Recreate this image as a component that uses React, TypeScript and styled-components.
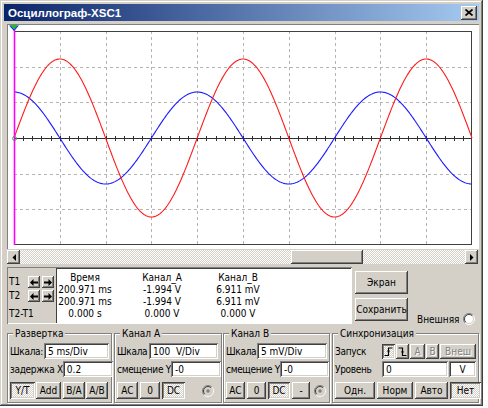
import React from "react";
import styled, { createGlobalStyle, css } from "styled-components";

const GlobalStyle = createGlobalStyle`
  html, body { margin: 0; padding: 0; background: #ffffff; }
  body {
    font-family: "DejaVu Sans Condensed", "DejaVu Sans", "Liberation Sans", Arial, sans-serif;
    font-stretch: condensed;
    font-size: 10px;
    color: #000;
  }
  * { box-sizing: border-box; }
`;

const raised = css`
  background: #d4d0c8;
  box-shadow: inset -1px -1px #404040, inset 1px 1px #ffffff, inset -2px -2px #808080, inset 2px 2px #d4d0c8;
`;
const pressed = css`
  background-color: #ffffff;
  background-image: repeating-conic-gradient(#d4d0c8 0 25%, #ffffff 0 50%);
  background-size: 2px 2px;
  box-shadow: inset 1px 1px #404040, inset -1px -1px #ffffff, inset 2px 2px #808080, inset -2px -2px #d4d0c8;
`;

const Window = styled.div`
  width: 483px;
  height: 406px;
  background: #d4d0c8;
  box-shadow: inset -1px -1px #404040, inset 1px 1px #d4d0c8, inset -2px -2px #808080, inset 2px 2px #ffffff;
  padding: 4px 4px 3px 4px;
  display: flex;
  flex-direction: column;
`;

const TitleBar = styled.div`
  height: 17px;
  display: flex;
  align-items: center;
  justify-content: space-between;
  background: linear-gradient(to right, #0a246a, #a6caf0);
  padding: 0 2px 0 4px;
`;

const TitleText = styled.span`
  font-family: "Liberation Sans", Arial, sans-serif;
  font-stretch: normal;
  font-weight: bold;
  font-size: 11.5px;
  color: #ffffff;
`;

const CloseButton = styled.div`
  ${raised};
  width: 16px;
  height: 14px;
  display: flex;
  align-items: center;
  justify-content: center;
  svg { display: block; }
`;

const Screen = styled.div`
  margin: 3px 0 0 3px;
  width: 472px;
  height: 225px;
  flex: none;
  background: #ffffff;
  box-shadow: inset 1px 1px #808080, inset -1px -1px #ffffff;
  padding: 1px 6px 0 6px;
  svg { display: block; overflow: visible; }
`;

const ScrollBar = styled.div`
  margin: 1px 1px 0 3px;
  height: 14px;
  flex: none;
  display: flex;
`;

const ScrollBtn = styled.div`
  ${raised};
  width: 13px;
  height: 14px;
  display: flex;
  align-items: center;
  justify-content: center;
  svg { display: block; }
`;

const ScrollTrack = styled.div`
  flex: 1;
  display: flex;
  background-color: #ffffff;
  background-image: repeating-conic-gradient(#d4d0c8 0 25%, #ffffff 0 50%);
  background-size: 2px 2px;
`;

const ScrollThumb = styled.div<{ $offset: number; $w: number }>`
  ${raised};
  margin-left: ${(p) => p.$offset}px;
  width: ${(p) => p.$w}px;
  height: 14px;
`;

const MeasureRow = styled.div`
  margin: 3px 0 0 3px;
  height: 57px;
  flex: none;
  display: flex;
`;

const MeasureFrame = styled.div`
  width: 345px;
  height: 57px;
  display: flex;
  padding: 1px;
  box-shadow: inset 1px 1px #808080, inset -1px -1px #ffffff;
`;

const CursorPanel = styled.div`
  width: 48px;
  display: grid;
  grid-template-columns: 17px 12px 12px;
  grid-template-rows: 12px 12px 1fr;
  column-gap: 2px;
  row-gap: 2px;
  padding: 8px 0 0 1px;
  align-items: center;
`;

const CursorLabel = styled.span<{ $span?: boolean }>`
  grid-column: ${(p) => (p.$span ? "1 / 4" : "auto")};
  line-height: 12px;
`;

const ArrowBtn = styled.div`
  ${raised};
  width: 12px;
  height: 12px;
  display: flex;
  align-items: center;
  justify-content: center;
  svg { display: block; }
`;

const Readout = styled.div`
  flex: 1;
  background: #ffffff;
  box-shadow: inset 1px 1px #404040;
  display: grid;
  grid-template-columns: 58px 96px 56px;
  grid-auto-rows: 12px;
  padding-top: 4px;
`;

const Cell = styled.span`
  text-align: center;
  line-height: 12px;
  white-space: nowrap;
`;

const SideButtons = styled.div`
  margin-left: 3px;
  width: 53px;
  display: flex;
  flex-direction: column;
  gap: 4px;
  padding-top: 4px;
`;

const Button = styled.div<{ $w?: number; $h?: number; $on?: boolean; $off?: boolean }>`
  ${(p) => (p.$on ? pressed : raised)};
  width: ${(p) => (p.$w ? `${p.$w}px` : "100%")};
  height: ${(p) => p.$h ?? 17}px;
  flex: none;
  display: flex;
  align-items: center;
  justify-content: center;
  white-space: nowrap;
  color: ${(p) => (p.$off ? "#808080" : "#000000")};
  text-shadow: ${(p) => (p.$off ? "1px 1px #ffffff" : "none")};
  svg { display: block; }
`;

const External = styled.div`
  align-self: flex-end;
  margin: 0 0 -1px 9px;
  display: flex;
  align-items: center;
  gap: 3px;
  svg { display: block; }
`;

const Groups = styled.div`
  margin: 3px 0 0 3px;
  display: flex;
`;

const Group = styled.fieldset<{ $w: number; $ml?: number; $pr?: number }>`
  margin: 0 0 0 ${(p) => p.$ml ?? 0}px;
  width: ${(p) => p.$w}px;
  min-width: 0;
  flex: none;
  border: 1px solid #808080;
  box-shadow: inset 1px 1px #ffffff, 1px 1px #ffffff;
  padding: 3px ${(p) => p.$pr ?? 2}px 3px 1px;
  display: flex;
  flex-direction: column;
`;

const Legend = styled.legend`
  margin-left: 4px;
  padding: 0 2px;
  line-height: 13px;
  background: #d4d0c8;
`;

const Row = styled.div<{ $mt?: number }>`
  display: flex;
  align-items: center;
  justify-content: space-between;
  height: 16px;
  margin-top: ${(p) => p.$mt ?? 0}px;
  padding-left: 1px;
`;

const BtnRow = styled.div<{ $mt?: number }>`
  display: flex;
  align-items: center;
  gap: 2px;
  height: 17px;
  margin-top: ${(p) => p.$mt ?? 0}px;
  padding-left: 1px;
`;

const Label = styled.span`
  white-space: nowrap;
  letter-spacing: -0.3px;
`;

const Field = styled.input<{ $w: number; $center?: boolean }>`
  width: ${(p) => p.$w}px;
  height: 16px;
  flex: none;
  border: none;
  outline: none;
  margin: 0;
  padding: 0 0 0 ${(p) => (p.$center ? 0 : 4)}px;
  text-align: ${(p) => (p.$center ? "center" : "left")};
  font: inherit;
  color: #000;
  background: #ffffff;
  box-shadow: inset 1px 1px #808080, inset -1px -1px #ffffff, inset 2px 2px #404040, inset -2px -2px #d4d0c8;
`;

const Group2 = styled.div`
  display: flex;
  gap: 1px;
`;

const Spacer = styled.div`
  flex: 1;
`;

const RadioWrap = styled.div<{ $mr: number }>`
  margin-right: ${(p) => p.$mr}px;
  svg { display: block; }
`;

/* ---------- drawings ---------- */

const Radio: React.FC<{ fill: string; dot?: boolean }> = ({ fill, dot }) => (
  <svg width="12" height="12" viewBox="0 0 12 12">
    <circle cx="6" cy="6" r="4.5" fill={fill} />
    <path d="M9.9 2.1 A5.5 5.5 0 0 0 2.1 9.9" fill="none" stroke="#808080" strokeWidth="1" />
    <path d="M2.1 9.9 A5.5 5.5 0 0 0 9.9 2.1" fill="none" stroke="#ffffff" strokeWidth="1" />
    <path d="M9.2 2.8 A4.5 4.5 0 0 0 2.8 9.2" fill="none" stroke="#404040" strokeWidth="1" />
    <path d="M2.8 9.2 A4.5 4.5 0 0 0 9.2 2.8" fill="none" stroke="#d4d0c8" strokeWidth="1" />
    {dot && <circle cx="6" cy="6" r="1.7" fill="#808080" />}
  </svg>
);

const LeftArrow = () => (
  <svg width="8" height="7" viewBox="0 0 8 7">
    <path d="M0 3.5 L3.5 0 L3.5 2.5 L8 2.5 L8 4.5 L3.5 4.5 L3.5 7 Z" fill="#000" />
  </svg>
);
const RightArrow = () => (
  <svg width="8" height="7" viewBox="0 0 8 7">
    <path d="M8 3.5 L4.5 0 L4.5 2.5 L0 2.5 L0 4.5 L4.5 4.5 L4.5 7 Z" fill="#000" />
  </svg>
);

const TriLeft = () => (
  <svg width="4" height="7" viewBox="0 0 4 7">
    <path d="M4 0 L0.5 3.5 L4 7 Z" fill="#000" />
  </svg>
);
const TriRight = () => (
  <svg width="4" height="7" viewBox="0 0 4 7">
    <path d="M0 0 L3.5 3.5 L0 7 Z" fill="#000" />
  </svg>
);

const RiseEdge = () => (
  <svg width="9" height="9" viewBox="0 0 9 9">
    <path d="M0.5 8.5 H4.5 V1 H8.5" fill="none" stroke="#000" strokeWidth="1.2" />
    <path d="M2.8 4.5 L4.5 2.4 L6.2 4.5 Z" fill="#000" />
  </svg>
);
const FallEdge = () => (
  <svg width="9" height="9" viewBox="0 0 9 9">
    <path d="M0.5 1 H4.5 V8.5 H8.5" fill="none" stroke="#000" strokeWidth="1.2" />
    <path d="M2.8 4.5 L4.5 6.6 L6.2 4.5 Z" fill="#000" />
  </svg>
);

const PW = 458;
const PH = 214;
const PX0 = 1;
const PY0 = 6;
const CY = PY0 + PH / 2;
const DIVX = PW / 10;
const DIVY = PH / 6;
const PERIOD = DIVX * 4;

function wave(amp: number, phase: number): string {
  let d = "";
  for (let x = 0; x <= PW; x += 1) {
    const y = CY - amp * Math.sin((2 * Math.PI * x) / PERIOD + phase);
    d += `${x === 0 ? "M" : "L"}${(PX0 + x).toFixed(1)} ${y.toFixed(2)} `;
  }
  return d;
}

const Plot = () => {
  const vlines = Array.from({ length: 9 }, (_, i) => PX0 + (i + 1) * DIVX);
  const hlines = [1, 2, 4, 5].map((j) => PY0 + j * DIVY);
  const ticks = Array.from({ length: 49 }, (_, k) => PX0 + (k + 1) * (DIVX / 5));
  return (
    <svg width="460" height="221" viewBox="0 0 460 221">
      {vlines.map((x, i) => (
        <line key={`v${i}`} x1={Math.round(x) + 0.5} y1={PY0} x2={Math.round(x) + 0.5} y2={PY0 + PH}
          stroke="#b4b4b4" strokeDasharray="3 3" shapeRendering="crispEdges" />
      ))}
      {hlines.map((y, i) => (
        <line key={`h${i}`} x1={PX0} y1={Math.round(y) + 0.5} x2={PX0 + PW} y2={Math.round(y) + 0.5}
          stroke="#b4b4b4" strokeDasharray="3 3" shapeRendering="crispEdges" />
      ))}
      <line x1={PX0} y1={CY + 0.5} x2={PX0 + PW} y2={CY + 0.5} stroke="#303030" shapeRendering="crispEdges" />
      {ticks.map((x, i) => (
        <line key={`t${i}`} x1={Math.round(x) + 0.5} y1={CY - 2} x2={Math.round(x) + 0.5} y2={CY + 3}
          stroke="#303030" shapeRendering="crispEdges" />
      ))}
      <rect x={PX0 + 0.5} y={PY0 + 0.5} width={PW - 1} height={PH - 1} fill="none" stroke="#404040" shapeRendering="crispEdges" />
      <path d={wave(46, Math.PI / 2)} fill="none" stroke="#1a1aff" strokeWidth="1.1" />
      <path d={wave(79, 0)} fill="none" stroke="#ff1a1a" strokeWidth="1.1" />
      <circle cx={PX0 + 0.5} cy={CY + 0.5} r="2" fill="none" stroke="#30c030" strokeWidth="1" />
      <line x1={PX0 + 0.5} y1={2} x2={PX0 + 0.5} y2={PY0 + PH} stroke="#ff00ff" strokeWidth="1.6" />
      <path d="M-4 0.5 L6 0.5 L1 6 Z" fill="#2030ff" />
      <path d="M-3 0 L5 0 L1 4.5 Z" fill="#20c020" />
    </svg>
  );
};

export default function App() {
  return (
    <>
      <GlobalStyle />
      <Window>
        <TitleBar>
          <TitleText>Осциллограф-XSC1</TitleText>
          <CloseButton>
            <svg width="8" height="7" viewBox="0 0 8 7">
              <path d="M0.5 0.5 L7.5 6.5 M7.5 0.5 L0.5 6.5" stroke="#000" strokeWidth="1.7" />
            </svg>
          </CloseButton>
        </TitleBar>

        <Screen>
          <Plot />
        </Screen>

        <ScrollBar>
          <ScrollBtn><TriLeft /></ScrollBtn>
          <ScrollTrack>
            <ScrollThumb $offset={271} $w={72} />
          </ScrollTrack>
          <ScrollBtn><TriRight /></ScrollBtn>
        </ScrollBar>

        <MeasureRow>
          <MeasureFrame>
            <CursorPanel>
              <CursorLabel>T1</CursorLabel>
              <ArrowBtn><LeftArrow /></ArrowBtn>
              <ArrowBtn><RightArrow /></ArrowBtn>
              <CursorLabel>T2</CursorLabel>
              <ArrowBtn><LeftArrow /></ArrowBtn>
              <ArrowBtn><RightArrow /></ArrowBtn>
              <CursorLabel $span>T2-T1</CursorLabel>
            </CursorPanel>
            <Readout>
              <Cell>Время</Cell>
              <Cell>Канал_A</Cell>
              <Cell>Канал_B</Cell>
              <Cell>200.971 ms</Cell>
              <Cell>-1.994 V</Cell>
              <Cell>6.911 mV</Cell>
              <Cell>200.971 ms</Cell>
              <Cell>-1.994 V</Cell>
              <Cell>6.911 mV</Cell>
              <Cell>0.000 s</Cell>
              <Cell>0.000 V</Cell>
              <Cell>0.000 V</Cell>
            </Readout>
          </MeasureFrame>
          <SideButtons>
            <Button $h={23}>Экран</Button>
            <Button $h={23}>Сохранить</Button>
          </SideButtons>
          <External>
            <span>Внешняя</span>
            <Radio fill="#ffffff" />
          </External>
        </MeasureRow>

        <Groups>
          <Group $w={105}>
            <Legend>Развертка</Legend>
            <Row>
              <Label>Шкала:</Label>
              <Field $w={65} readOnly value="5 ms/Div" />
            </Row>
            <Row $mt={2}>
              <Label>задержка X</Label>
              <Field $w={50} readOnly value="0.2" />
            </Row>
            <BtnRow $mt={5}>
              <Group2>
                <Button $w={25} $on>Y/T</Button>
                <Button $w={25}>Add</Button>
              </Group2>
              <Group2>
                <Button $w={22}>B/A</Button>
                <Button $w={22}>A/B</Button>
              </Group2>
            </BtnRow>
          </Group>

          <Group $w={108} $ml={2} $pr={3}>
            <Legend>Канал A</Legend>
            <Row>
              <Label>Шкала</Label>
              <Field $w={69} readOnly value="100  V/Div" />
            </Row>
            <Row $mt={2}>
              <Label>смещение Y</Label>
              <Field $w={50} readOnly value="-0" />
            </Row>
            <BtnRow $mt={5}>
              <Button $w={21}>AC</Button>
              <Button $w={20}>0</Button>
              <Button $w={23} $on>DC</Button>
              <Spacer />
              <RadioWrap $mr={4}><Radio fill="#d4d0c8" dot /></RadioWrap>
            </BtnRow>
          </Group>

          <Group $w={107} $ml={1}>
            <Legend>Канал B</Legend>
            <Row>
              <Label>Шкала</Label>
              <Field $w={70} readOnly value="5 mV/Div" />
            </Row>
            <Row $mt={2}>
              <Label>смещение Y</Label>
              <Field $w={49} readOnly value="-0" />
            </Row>
            <BtnRow $mt={5}>
              <Button $w={19}>AC</Button>
              <Button $w={19}>0</Button>
              <Button $w={22} $on>DC</Button>
              <Button $w={18}>-</Button>
              <Spacer />
              <RadioWrap $mr={1}><Radio fill="#d4d0c8" dot /></RadioWrap>
            </BtnRow>
          </Group>

          <Group $w={147} $ml={2}>
            <Legend>Синхронизация</Legend>
            <Row>
              <Label>Запуск</Label>
              <Group2>
                <Button $w={13} $h={15} $on><RiseEdge /></Button>
                <Button $w={13} $h={15}><FallEdge /></Button>
                <Button $w={15} $h={15} $off>A</Button>
                <Button $w={13} $h={15} $off>B</Button>
                <Button $w={36} $h={15} $off>Внеш</Button>
              </Group2>
            </Row>
            <Row $mt={2}>
              <Label>Уровень</Label>
              <Group2>
                <Field $w={66} readOnly value="0" />
                <Field $w={27} $center readOnly value="V" />
              </Group2>
            </Row>
            <BtnRow $mt={5}>
              <Button $w={40}>Одн.</Button>
              <Button $w={36}>Норм</Button>
              <Button $w={33}>Авто</Button>
              <Button $w={31} $on>Нет</Button>
            </BtnRow>
          </Group>
        </Groups>
      </Window>
    </>
  );
}
